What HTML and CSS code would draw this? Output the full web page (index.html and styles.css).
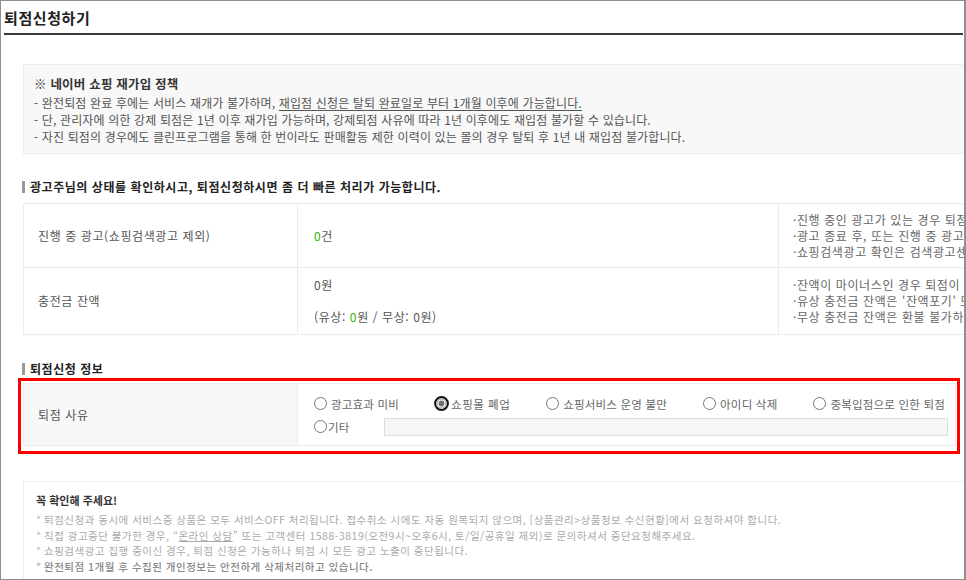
FILE: index.html
```html
<!DOCTYPE html>
<html lang="ko">
<head>
<meta charset="utf-8">
<title>퇴점신청하기</title>
<link rel="stylesheet" href="styles.css">
</head>
<body>
<div class="frame">
  <h1 class="title">퇴점신청하기</h1>
  <div class="content">
    <div class="policy">
      <p class="policy-head">※ 네이버 쇼핑 재가입 정책</p>
      <p>- 완전퇴점 완료 후에는 서비스 재개가 불가하며, <u>재입점 신청은 탈퇴 완료일로 부터 1개월 이후에 가능합니다.</u></p>
      <p>- 단, 관리자에 의한 강제 퇴점은 1년 이후 재가입 가능하며, 강제퇴점 사유에 따라 1년 이후에도 재입점 불가할 수 있습니다.</p>
      <p>- 자진 퇴점의 경우에도 클린프로그램을 통해 한 번이라도 판매활동 제한 이력이 있는 몰의 경우 탈퇴 후 1년 내 재입점 불가합니다.</p>
    </div>

    <h2 class="sec">광고주님의 상태를 확인하시고, 퇴점신청하시면 좀 더 빠른 처리가 가능합니다.</h2>
    <table class="status">
      <colgroup><col class="c1"><col class="c2"><col class="c3"></colgroup>
      <tr class="r1">
        <th>진행 중 광고(쇼핑검색광고 제외)</th>
        <td><span class="green">0</span>건</td>
        <td class="notes">
          <p>·진행 중인 광고가 있는 경우 퇴점신청이 불가합니다.</p>
          <p>·광고 종료 후, 또는 진행 중 광고를 중단한 후 신청해주세요.</p>
          <p>·쇼핑검색광고 확인은 검색광고센터에서 가능합니다.</p>
        </td>
      </tr>
      <tr class="r2">
        <th>충전금 잔액</th>
        <td>
          <p>0원</p>
          <p class="sub">(유상: <span class="green">0</span>원 / 무상: 0원)</p>
        </td>
        <td class="notes">
          <p>·잔액이 마이너스인 경우 퇴점이 제한됩니다.</p>
          <p>·유상 충전금 잔액은 '잔액포기' 또는 환불 후 신청해주세요.</p>
          <p>·무상 충전금 잔액은 환불 불가하며 퇴점 시 소멸됩니다.</p>
        </td>
      </tr>
    </table>

    <h2 class="sec sec2">퇴점신청 정보</h2>
    <div class="hl">
      <table class="reason">
        <colgroup><col class="c1"><col></colgroup>
        <tr>
          <th>퇴점 사유</th>
          <td>
            <div class="opts">
              <label class="opt"><span class="radio"></span>광고효과 미비</label>
              <label class="opt opt-on"><svg class="radio-on" width="15" height="15" viewBox="0 0 15 15"><circle cx="7.5" cy="7.5" r="6.4" fill="#fff" stroke="#111" stroke-width="2"/><circle cx="7.5" cy="7.5" r="4.6" fill="#fff" stroke="#8a8a8a" stroke-width="1"/><circle cx="7.5" cy="7.5" r="2.9" fill="#6f6f6f"/></svg>쇼핑몰 폐업</label>
              <label class="opt"><span class="radio"></span>쇼핑서비스 운영 불만</label>
              <label class="opt"><span class="radio"></span>아이디 삭제</label>
              <label class="opt"><span class="radio"></span>중복입점으로 인한 퇴점</label>
            </div>
            <div class="etc">
              <label class="opt tight"><span class="radio"></span>기타</label>
              <input class="etc-input" type="text" disabled>
            </div>
          </td>
        </tr>
      </table>
    </div>

    <div class="notice">
      <h3>꼭 확인해 주세요!</h3>
      <ul>
        <li>퇴점신청과 동시에 서비스중 상품은 모두 서비스OFF 처리됩니다. 접수취소 시에도 자동 원복되지 않으며, [상품관리&gt;상품정보 수신현황]에서 요청하셔야 합니다.</li>
        <li>직접 광고중단 불가한 경우, “<u>온라인 상담</u>” 또는 고객센터 1588-3819(오전9시~오후6시, 토/일/공휴일 제외)로 문의하셔서 중단요청해주세요.</li>
        <li>쇼핑검색광고 집행 중이신 경우, 퇴점 신청은 가능하나 퇴점 시 모든 광고 노출이 중단됩니다.</li>
        <li class="strong">완전퇴점 1개월 후 수집된 개인정보는 안전하게 삭제처리하고 있습니다.</li>
      </ul>
    </div>
  </div>
</div>
</body>
</html>
```

FILE: styles.css
```css
html, body {
  margin: 0;
  padding: 0;
  background: #fff;
}

body {
  font-family: "Noto Sans CJK KR", "Noto Sans", sans-serif;
  color: #555;
}

.frame {
  width: 966px;
  height: 580px;
  box-sizing: border-box;
  border: 1px solid #8f8f8f;
  border-right-width: 2px;
  overflow: hidden;
  background: #fff;
}

.title {
  margin: 0 1px 0 3px;
  padding: 7px 0 5px;
  font-size: 15px;
  line-height: 20px;
  font-weight: 700;
  color: #222;
  letter-spacing: 0.6px;
  border-bottom: 2px solid #3a3a3a;
}

.content {
  width: 1120px;
  padding-left: 22px;
}

.policy {
  margin-top: 29px;
  background: #f8f8f8;
  border: 1px solid #ececec;
  padding: 10px 10px 8px;
}

.policy p {
  margin: 0;
  font-size: 12px;
  line-height: 17px;
  color: #555;
  letter-spacing: 0.14px;
}

.policy .policy-head {
  margin-bottom: 2px;
  font-size: 12.5px;
  font-weight: 700;
  color: #333;
  letter-spacing: 0.2px;
}

.policy u {
  text-underline-offset: 2px;
}

.sec {
  display: flex;
  align-items: center;
  gap: 5px;
  margin: 25px 0 8px -1px;
  font-size: 12px;
  line-height: 16px;
  font-weight: 700;
  color: #222;
  letter-spacing: 0.55px;
}

.sec::before {
  content: "";
  width: 3px;
  height: 12px;
  background: #9a9a9a;
}

.sec2 {
  margin-top: 26px;
  margin-bottom: 1px;
}

.status {
  width: 1100px;
  border-collapse: collapse;
  table-layout: fixed;
}

.c1 { width: 274px; }
.c2 { width: 481px; }

.status th,
.status td,
.reason th,
.reason td {
  border: 1px solid #ebebeb;
  vertical-align: middle;
  text-align: left;
  font-weight: 400;
  font-size: 12px;
  line-height: 16px;
  color: #555;
  letter-spacing: 0.6px;
}

.status th,
.reason th {
  padding: 0 0 0 14px;
}

.status td {
  padding: 0 0 0 16px;
}

.status p {
  margin: 0;
}

.status .sub {
  margin-top: 16px;
}

.status .notes {
  padding-left: 14px;
  color: #666;
  white-space: nowrap;
}

.r1 { height: 64px; }
.r2 { height: 67px; }

.green {
  color: #2db400;
}

.hl {
  width: 933px;
  margin-left: -5px;
  border: 3px solid #f00;
  padding: 2px 1px 5px 2px;
}

.reason {
  width: 933px;
  border-collapse: collapse;
  table-layout: fixed;
}

.reason th {
  background: #f8f8f8;
}

.reason td {
  padding: 8px 7px 7px 16px;
  letter-spacing: 0;
}

.opts,
.etc {
  display: flex;
  align-items: center;
  height: 23px;
}

.opts {
  gap: 36px;
}

.opt {
  display: inline-flex;
  align-items: center;
  gap: 4px;
  font-size: 11.5px;
  color: #666;
  letter-spacing: 0.2px;
  white-space: nowrap;
}

.opt-on {
  margin-left: -1px;
  gap: 2px;
  letter-spacing: 0.5px;
}

.tight {
  gap: 1px;
}

.radio {
  width: 11px;
  height: 11px;
  border: 1px solid #777;
  border-radius: 50%;
  background: #fff;
  flex: none;
}

.radio-on {
  flex: none;
  display: block;
}

.etc-input {
  flex: none;
  width: 564px;
  height: 18px;
  margin: 0 0 0 auto;
  padding: 0;
  box-sizing: border-box;
  border: 1px solid #dedede;
  background: #f6f6f6;
}

.notice {
  margin-top: 27px;
  border: 1px solid #eee;
  padding: 10px 12px;
}

.notice h3 {
  margin: 0 0 4px;
  font-size: 11px;
  line-height: 16px;
  font-weight: 700;
  color: #333;
}

.notice ul {
  margin: 0;
  padding: 0;
  list-style: none;
}

.notice li {
  font-size: 10.5px;
  line-height: 15.5px;
  color: #aaa;
  letter-spacing: 0.5px;
  white-space: nowrap;
}

.notice li::before {
  content: "*";
  display: inline-block;
  width: 8px;
  color: #bbb;
}

.notice li.strong {
  color: #888;
  font-weight: 500;
}
```
